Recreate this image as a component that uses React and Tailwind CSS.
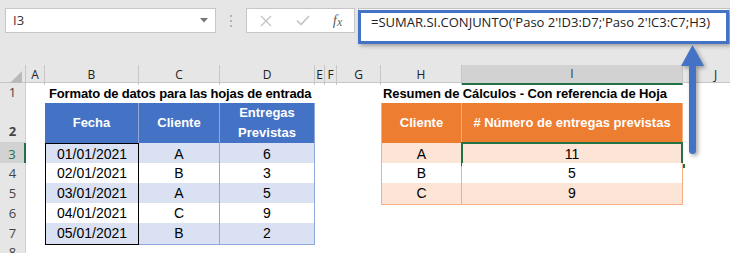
import React from "react";

const COLS = "grid grid-cols-[26px_19px_94px_81px_95px_10px_12px_44px_81px_221px_66px]";
const UI = "font-['Open_Sans',sans-serif]";
const CELL = "font-['Liberation_Sans',Arial,sans-serif]";

const entradas = [
  ["01/01/2021", "A", "6"],
  ["02/01/2021", "B", "3"],
  ["03/01/2021", "A", "5"],
  ["04/01/2021", "C", "9"],
  ["05/01/2021", "B", "2"],
];

const resumen = [
  ["A", "11"],
  ["B", "5"],
  ["C", "9"],
];

function RowHead({ n, selected }) {
  if (selected) {
    return (
      <div className={`flex items-end justify-center pb-[1px] bg-[#d2d2d2] border-b border-b-[#c6c6c6] border-r-2 border-r-[#217346] text-[13px] text-[#217346] ${UI}`}>
        {n}
      </div>
    );
  }
  return (
    <div className={`flex items-end justify-center pb-[1px] bg-[#e6e6e6] border-b border-r border-[#d0d0d0] text-[13px] text-[#444] ${UI}`}>
      {n}
    </div>
  );
}

function ColHead({ label, selected }) {
  if (selected) {
    return (
      <div className="flex items-center justify-center bg-[#d2d2d2] border-r border-[#c6c6c6] border-b-2 border-b-[#217346] text-[#333]">
        {label}
      </div>
    );
  }
  return (
    <div className="flex items-center justify-center border-r border-[#c6c6c6] text-[#222]">
      {label}
    </div>
  );
}

export default function App() {
  return (
    <div className="relative w-[730px] h-[253px] overflow-hidden bg-white">
      {/* formula bar */}
      <div className={`flex items-start h-[65px] pt-[8px] bg-[#e6e6e6] ${UI}`}>
        <div className="ml-[5px] w-[211px] h-[25px] flex items-center justify-between pl-[7px] pr-[7px] bg-white border border-[#c6c6c6]">
          <span className="text-[13px] text-[#333]">I3</span>
          <svg width="8" height="5" viewBox="0 0 8 5">
            <path d="M0 0h8L4 4.5z" fill="#777" />
          </svg>
        </div>
        <div className="w-[30px] h-[25px] flex flex-col items-center justify-center gap-[3px]">
          <div className="w-[2px] h-[2px] bg-[#b4b4b4]" />
          <div className="w-[2px] h-[2px] bg-[#b4b4b4]" />
          <div className="w-[2px] h-[2px] bg-[#b4b4b4]" />
        </div>
        <div className="w-[109px] h-[25px] flex items-center bg-white border border-[#c6c6c6]">
          <div className="w-[37px] flex justify-center">
            <svg width="12" height="12" viewBox="0 0 12 12">
              <path d="M1 1l10 10M11 1L1 11" stroke="#c4c4c4" strokeWidth="1.4" />
            </svg>
          </div>
          <div className="w-[37px] flex justify-center">
            <svg width="14" height="11" viewBox="0 0 14 11">
              <path d="M1 5.5l4 4L13 1" stroke="#c4c4c4" strokeWidth="1.6" fill="none" />
            </svg>
          </div>
          <div className="flex-1 flex justify-center font-['Liberation_Serif',serif] italic text-[15px] text-[#666] leading-none">
            <span>f</span>
            <span className="text-[12px] mt-[3px]">x</span>
          </div>
        </div>
        <div className="ml-[3px] flex-1 h-[36px] pl-[12px] pt-[4px] bg-white border border-[#c6c6c6] text-[13px] leading-[18px] text-[#222] whitespace-nowrap">
          =SUMAR.SI.CONJUNTO('Paso 2'!D3:D7;'Paso 2'!C3:C7;H3)
        </div>
      </div>

      {/* column headers */}
      <div className={`${COLS} h-[18px] bg-[#e6e6e6] border-b border-[#c6c6c6] text-[12px] ${UI}`}>
        <div className="flex items-end justify-end pr-[3px] pb-[2px] border-r border-[#c6c6c6]">
          <svg width="12" height="12" viewBox="0 0 12 12">
            <path d="M12 0v12H0z" fill="#b9b9b9" />
          </svg>
        </div>
        <ColHead label="A" />
        <ColHead label="B" />
        <ColHead label="C" />
        <ColHead label="D" />
        <ColHead label="E" />
        <ColHead label="F" />
        <ColHead label="G" />
        <ColHead label="H" />
        <ColHead label="I" selected />
        <ColHead label="J" />
      </div>

      {/* row 1: titles */}
      <div className={`${COLS} h-[20px] ${CELL}`}>
        <RowHead n="1" />
        <div />
        <div className="col-span-3 flex items-end pb-[1px] pl-[4px] text-[13px] tracking-[-0.15px] font-bold whitespace-nowrap">
          Formato de datos para las hojas de entrada
        </div>
        <div />
        <div />
        <div />
        <div className="col-span-2 flex items-end pb-[1px] pl-[2px] text-[13px] tracking-[-0.1px] font-bold whitespace-nowrap">
          Resumen de Cálculos - Con referencia de Hoja
        </div>
        <div />
      </div>

      {/* row 2: table headers */}
      <div className={`${COLS} h-[40px] text-[13px] font-bold text-white ${CELL}`}>
        <RowHead n="2" />
        <div />
        <div className="flex items-center justify-center bg-[#4472c4] border-r border-[#8ea9db]">Fecha</div>
        <div className="flex items-center justify-center bg-[#4472c4] border-r border-[#8ea9db]">Cliente</div>
        <div className="flex items-center justify-center text-center leading-[20px] bg-[#4472c4] border-r border-[#8ea9db]">
          Entregas
          <br />
          Previstas
        </div>
        <div />
        <div />
        <div />
        <div className="flex items-center justify-center bg-[#ed7d31] border-x border-[#f4b084]">Cliente</div>
        <div className="flex items-center justify-center bg-[#ed7d31] border-r border-[#f4b084]">
          # Número de entregas previstas
        </div>
        <div />
      </div>

      {/* rows 3-7 */}
      {entradas.map((r, i) => {
        const band = i % 2 === 0 ? "bg-[#d9e1f2]" : "bg-white";
        const sum = resumen[i];
        const orange = i % 2 === 0 ? "bg-[#fce4d6]" : "bg-white";
        return (
          <div key={i} className={`${COLS} h-[20px] text-[14px] text-black ${CELL}`}>
            <RowHead n={String(i + 3)} selected={i === 0} />
            <div />
            <div className={`flex items-center justify-center border-x border-b border-black ${i === 0 ? "border-t" : ""} ${band}`}>
              {r[0]}
            </div>
            <div className={`flex items-center justify-center border-r border-b border-[#8ea9db] ${band}`}>{r[1]}</div>
            <div className={`flex items-center justify-center border-r border-b border-[#8ea9db] ${band}`}>{r[2]}</div>
            <div />
            <div />
            <div />
            {sum ? (
              <>
                <div className={`flex items-center justify-center border-x border-b border-[#f4b084] ${orange}`}>{sum[0]}</div>
                <div className={`relative flex items-center justify-center border-r border-b border-[#f4b084] ${orange}`}>
                  {sum[1]}
                  {i === 0 && (
                    <>
                      <div className="absolute -left-[1px] -top-[1px] -right-[1px] -bottom-[1px] border-2 border-[#217346]" />
                      <div className="absolute -right-[4px] -bottom-[4px] w-[6px] h-[6px] bg-[#217346] border border-white" />
                    </>
                  )}
                </div>
              </>
            ) : (
              <>
                <div />
                <div />
              </>
            )}
            <div />
          </div>
        );
      })}

      {/* row 8 */}
      <div className={`${COLS} h-[20px]`}>
        <RowHead n="8" />
      </div>

      {/* highlight on formula */}
      <div className="absolute left-[358px] top-[10px] w-[371px] h-[34px] border-[3px] border-[#4472c4] shadow-[2px_2px_4px_rgba(0,0,0,0.3)]" />

      {/* arrow */}
      <svg
        className="absolute left-[678px] top-[42px] drop-shadow-[2px_2px_2px_rgba(0,0,0,0.35)]"
        width="28"
        height="116"
        viewBox="0 0 28 116"
      >
        <path d="M14.5 3L26 24H3z" fill="#4472c4" />
        <rect x="11" y="22" width="7" height="90" rx="3.5" fill="#4472c4" />
      </svg>
    </div>
  );
}
